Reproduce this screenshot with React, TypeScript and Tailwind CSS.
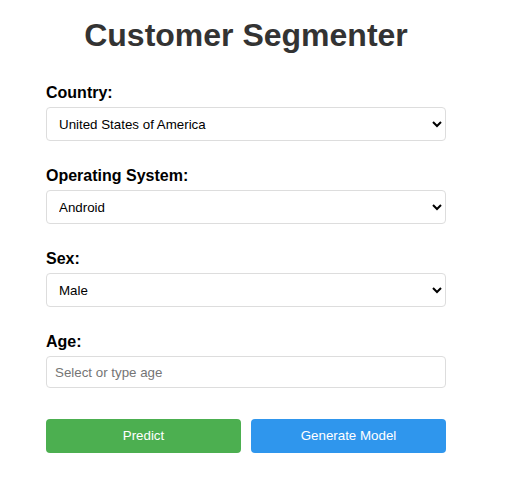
import React, { useState } from "react";

const countries = ["United States of America", "Canada", "United Kingdom", "Germany", "France", "India"];
const systems = ["Android", "iOS", "Windows", "macOS", "Linux"];
const sexes = ["Male", "Female"];

export default function App() {
    const [country, setCountry] = useState(countries[0]);
    const [os, setOs] = useState(systems[0]);
    const [sex, setSex] = useState(sexes[0]);
    const [age, setAge] = useState("");

    const selectClass =
        "block w-full h-[34px] px-2 border border-[#ddd] rounded-[4px] bg-white text-[13.33px] text-black outline-none";

    return (
        <div className="min-h-[495px] bg-white font-['Liberation_Sans',Arial,sans-serif] pt-[17px] pl-[46px]">
            <div className="w-[400px]">
                <h1 className="text-[32px] leading-[37px] font-bold text-[#333] text-center">Customer Segmenter</h1>

                {/* Form fields */}
                <div className="mt-[30px] flex flex-col gap-[26px]">
                    <div>
                        <label className="block text-[16px] leading-[18px] font-bold text-black mb-[5px]">Country:</label>
                        <select className={selectClass} value={country} onChange={(e) => setCountry(e.target.value)}>
                            {countries.map((c) => (
                                <option key={c}>{c}</option>
                            ))}
                        </select>
                    </div>
                    <div>
                        <label className="block text-[16px] leading-[18px] font-bold text-black mb-[5px]">Operating System:</label>
                        <select className={selectClass} value={os} onChange={(e) => setOs(e.target.value)}>
                            {systems.map((s) => (
                                <option key={s}>{s}</option>
                            ))}
                        </select>
                    </div>
                    <div>
                        <label className="block text-[16px] leading-[18px] font-bold text-black mb-[5px]">Sex:</label>
                        <select className={selectClass} value={sex} onChange={(e) => setSex(e.target.value)}>
                            {sexes.map((s) => (
                                <option key={s}>{s}</option>
                            ))}
                        </select>
                    </div>
                    <div>
                        <label className="block text-[16px] leading-[18px] font-bold text-black mb-[5px]">Age:</label>
                        <input
                            list="ages"
                            value={age}
                            onChange={(e) => setAge(e.target.value)}
                            placeholder="Select or type age"
                            className="block w-full h-[32px] px-2 border border-[#ddd] rounded-[4px] bg-white text-[13.33px] text-black placeholder:text-[#757575] outline-none"
                        />
                    </div>
                </div>

                <div className="mt-[31px] grid grid-cols-2 gap-[10px]">
                    <button className="h-[34px] rounded-[4px] bg-[#4caf50] text-white text-[13.33px]">Predict</button>
                    <button className="h-[34px] rounded-[4px] bg-[#2f96ed] text-white text-[13.33px]">Generate Model</button>
                </div>
            </div>
        </div>
    );
}
